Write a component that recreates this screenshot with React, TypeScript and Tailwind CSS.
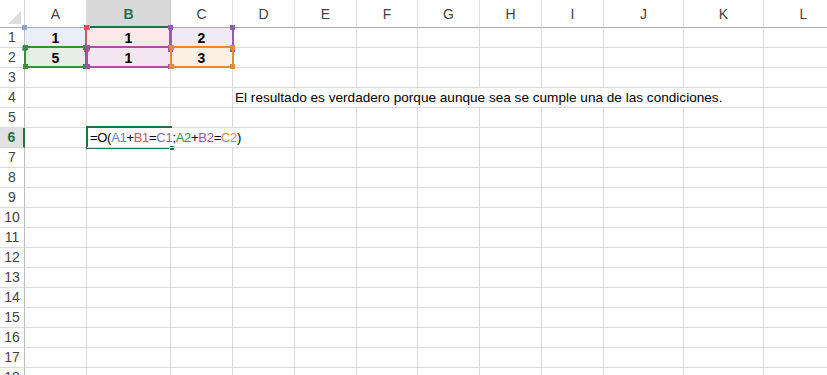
import React from 'react';

const colLetters = ['A', 'B', 'C', 'D', 'E', 'F', 'G', 'H', 'I', 'J', 'K', 'L'];
const rowCount = 18;

// colours of the cells referenced by the formula
const refs: Record<string, { fill: string; text: string }> = {
  A1: { fill: 'bg-[#e9eef8]', text: 'text-[#5f83cc]' },
  B1: { fill: 'bg-[#fce8ea]', text: 'text-[#d2505f]' },
  C1: { fill: 'bg-[#efebf4]', text: 'text-[#8d63ad]' },
  A2: { fill: 'bg-[#e6f0e2]', text: 'text-[#3c8f3c]' },
  B2: { fill: 'bg-[#f4e7f1]', text: 'text-[#a5509c]' },
  C2: { fill: 'bg-[#fbefe3]', text: 'text-[#d98a35]' },
};

const values: Record<string, string> = { A1: '1', B1: '1', C1: '2', A2: '5', B2: '1', C2: '3' };

const Cell = ({ id }: { id: string }) => {
  const ref = refs[id];
  return (
    <div
      className={`border-r border-b border-[#d9d9d9] flex items-center justify-center pt-[1px] text-[14px] font-bold text-black ${ref ? ref.fill : 'bg-white'}`}
    >
      {values[id] ?? ''}
    </div>
  );
};

const Ref = ({ id, children }: { id: string; children: React.ReactNode }) => (
  <span className={refs[id].text}>{children}</span>
);

// coloured outline drawn over a referenced range, with handles on its corners
const RangeBox = ({ pos, border, bg }: { pos: string; border: string; bg: string }) => (
  <div className={`absolute ${pos} ${border}`}>
    <span className={`absolute -left-[3px] -top-[3px] w-[5px] h-[5px] ${bg}`} />
    <span className={`absolute -right-[3px] -top-[3px] w-[5px] h-[5px] ${bg}`} />
    <span className={`absolute -left-[3px] -bottom-[3px] w-[5px] h-[5px] ${bg}`} />
    <span className={`absolute -right-[3px] -bottom-[3px] w-[5px] h-[5px] ${bg}`} />
  </div>
);

const rowCells = (r: number) => {
  if (r === 4) {
    return [
      <Cell key="A" id="A4" />,
      <Cell key="B" id="B4" />,
      <Cell key="C" id="C4" />,
      <div
        key="D"
        className="col-span-8 border-r border-b border-[#d9d9d9] bg-white flex items-end pl-[2px] text-[13.6px] leading-[18px] text-black whitespace-nowrap"
      >
        El resultado es verdadero porque aunque sea se cumple una de las condiciones.
      </div>,
      <Cell key="L" id="L4" />,
    ];
  }
  if (r === 6) {
    return [
      <Cell key="A" id="A6" />,
      <div
        key="B"
        className="relative z-10 col-span-3 border-b border-r border-[#d9d9d9] flex items-end pl-[3px] text-[13px] leading-[18px] tracking-[-0.3px] text-black whitespace-nowrap"
      >
        =O(<Ref id="A1">A1</Ref>+<Ref id="B1">B1</Ref>=<Ref id="C1">C1</Ref>;<Ref id="A2">A2</Ref>+
        <Ref id="B2">B2</Ref>=<Ref id="C2">C2</Ref>)
      </div>,
      ...colLetters.slice(4).map((c) => <Cell key={c} id={`${c}6`} />),
    ];
  }
  return colLetters.map((c) => <Cell key={c} id={`${c}${r}`} />);
};

export default function App() {
  return (
    <div className="relative w-[827px] h-[375px] overflow-hidden bg-white font-['Liberation_Sans',Arial,sans-serif]">
      <div className="grid grid-cols-[25px_62px_84px_62px_62px_62px_61px_62px_62px_62px_80px_80px_80px] grid-rows-[28px_repeat(18,20px)]">
        {/* corner */}
        <div className="relative border-r border-b border-r-[#d4d4d4] border-b-[#ababab] bg-white">
          <div className="absolute right-[3px] bottom-[3px] w-0 h-0 border-l-[13px] border-l-transparent border-b-[13px] border-b-[#dcdcdc]" />
        </div>
        {colLetters.map((c) =>
          c === 'B' ? (
            <div
              key={c}
              className="border-r border-r-[#c6c6c6] border-b-2 border-b-[#217346] bg-[#d8d8d8] flex items-center justify-center pt-[2px] text-[14px] font-bold text-[#217346]"
            >
              {c}
            </div>
          ) : (
            <div
              key={c}
              className="border-r border-b border-r-[#e1e1e1] border-b-[#ababab] bg-white flex items-center justify-center pt-[1px] text-[14px] text-[#444]"
            >
              {c}
            </div>
          ),
        )}
        {Array.from({ length: rowCount }, (_, i) => i + 1).map((r) => (
          <React.Fragment key={r}>
            {r === 6 ? (
              <div className="border-b border-b-[#d4d4d4] border-r-2 border-r-[#217346] bg-[#e1e1e1] flex items-center justify-center text-[14px] font-bold text-[#217346]">
                {r}
              </div>
            ) : (
              <div className="border-b border-r border-b-[#dadada] border-r-[#bdbdbd] bg-white flex items-center justify-center text-[14px] text-[#444]">
                {r}
              </div>
            )}
            {rowCells(r)}
          </React.Fragment>
        ))}
      </div>

      {/* outlines of the ranges referenced by the formula */}
      <RangeBox pos="left-[25px] top-[28px] w-[62px] h-[20px]" border="" bg="bg-[#8fa4c9]" />
      <RangeBox pos="left-[85px] top-[28px] w-[87px] h-[21px]" border="border-x-2 border-[#d35565]" bg="bg-[#d35565]" />
      <RangeBox pos="left-[169px] top-[28px] w-[65px] h-[21px]" border="border-x-2 border-[#8e5fb0]" bg="bg-[#8e5fb0]" />
      <RangeBox pos="left-[24px] top-[46px] w-[63px] h-[22px]" border="border-2 border-[#3d8b3d]" bg="bg-[#3d8b3d]" />
      <RangeBox pos="left-[86px] top-[46px] w-[86px] h-[22px]" border="border-2 border-[#a8509d]" bg="bg-[#a8509d]" />
      <RangeBox pos="left-[170px] top-[46px] w-[64px] h-[22px]" border="border-2 border-[#df8c38]" bg="bg-[#df8c38]" />

      {/* active cell B6, in edit mode */}
      <div className="absolute left-[86px] top-[126px] w-[86px] h-[23px] border-2 border-r-0 border-[#217346]">
        <span className="absolute -right-[3px] -bottom-[4px] w-[6px] h-[6px] bg-[#217346] border border-white" />
      </div>
    </div>
  );
}
